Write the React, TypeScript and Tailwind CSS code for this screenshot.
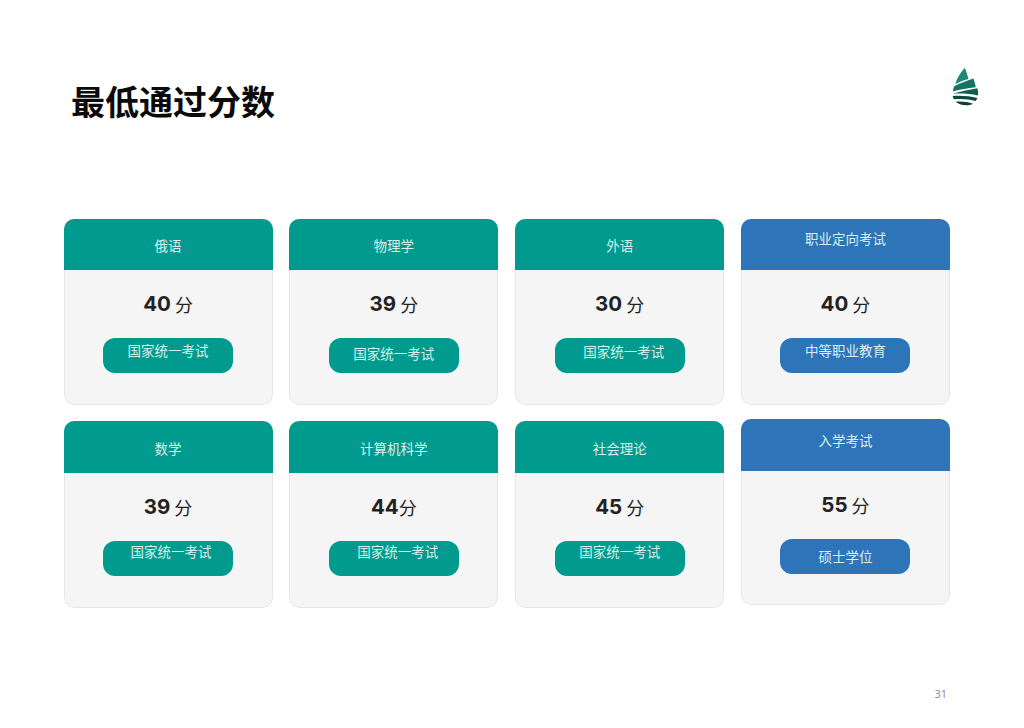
const cjk = "font-['Noto_Sans_CJK_SC',serif]";

type Card = {
  head: string;
  score: string;
  unit: string;
  pill: string;
  blue?: boolean;
  headClass: string;
  pillClass: string;
  cardClass: string;
};

const cards: Card[] = [
  { head: "俄语", score: "40", unit: " 分", pill: "国家统一考试", headClass: "h-[51px] pt-[2px]", pillClass: "pb-[11px]", cardClass: "h-[186px]" },
  { head: "物理学", score: "39", unit: " 分", pill: "国家统一考试", headClass: "h-[51px] pt-[2px]", pillClass: "pb-[5px]", cardClass: "h-[186px]" },
  { head: "外语", score: "30", unit: " 分", pill: "国家统一考试", headClass: "h-[51px] pt-[2px]", pillClass: "pb-[9px] pl-[8px]", cardClass: "h-[186px]" },
  { head: "职业定向考试", score: "40", unit: " 分", pill: "中等职业教育", blue: true, headClass: "h-[51px] pb-[13px]", pillClass: "pb-[11px]", cardClass: "h-[186px]" },
  { head: "数学", score: "39", unit: " 分", pill: "国家统一考试", headClass: "h-[52px] pt-[3px]", pillClass: "pb-[15px] pl-[6px]", cardClass: "h-[187px]" },
  { head: "计算机科学", score: "44", unit: "分", pill: "国家统一考试", headClass: "h-[52px] pt-[3px]", pillClass: "pb-[15px] pl-[8px]", cardClass: "h-[187px]" },
  { head: "社会理论", score: "45", unit: " 分", pill: "国家统一考试", headClass: "h-[52px] pt-[3px]", pillClass: "pb-[15px]", cardClass: "h-[187px]" },
  { head: "入学考试", score: "55", unit: " 分", pill: "硕士学位", blue: true, headClass: "h-[52px] pb-[9px]", pillClass: "pt-0", cardClass: "h-[186px] -mt-[2px]" },
];

function Logo() {
  return (
    <svg width="29" height="41" viewBox="66 48 88 122" aria-hidden="true">
      <path d="M108 52 C112 62 116 74 119 86 C104 90 90 95 79 102 C84 82 96 66 108 52Z" fill="#1d8a74" />
      <path d="M134 85 C137 93 140 102 141 111 C118 113 92 118 72 124 C72 118 74 112 76 108 C92 100 114 92 134 85Z" fill="#137561" />
      <path d="M146 114 C148 121 149 128 148 136 C124 131 96 129 71 131 C92 125 120 118 146 114Z" fill="#0f5f50" />
      <path d="M71 138 C96 136 122 138 146 144 C145 147 143 150 141 153 C120 147 96 145 75 148 C73 145 72 142 71 138Z" fill="#0c4a40" />
      <path d="M80 155 C96 153 116 155 133 161 C118 168 96 168 80 155Z" fill="#0b4038" />
    </svg>
  );
}

function ScoreCard({ c }: { c: Card }) {
  return (
    <div className={`flex flex-col overflow-hidden rounded-[10px] ${c.cardClass}`}>
      <div className={`shrink-0 flex items-center justify-center text-[13.5px] text-[#d8efeb] ${cjk} ${c.blue ? "bg-[#2e74b8]" : "bg-[#009b8e]"} ${c.headClass}`}>
        {c.head}
      </div>
      <div className="flex-1 flex flex-col items-center bg-[#f5f5f5] border-x border-b border-[#e6e6e6] rounded-b-[10px]">
        <div className="mt-[21px] h-[26px] flex items-center text-[#222222]">
          <span className="font-['Inter',sans-serif] font-bold text-[20.5px] leading-[26px]">{c.score}</span>
          <span className="font-['Noto_Sans_CJK_SC',sans-serif] font-normal text-[18px] leading-[26px] whitespace-pre">{c.unit}</span>
        </div>
        <div className={`mt-[21px] w-[130px] h-[35px] rounded-[12px] flex items-center justify-center text-[13.5px] text-[#d8efeb] ${cjk} ${c.blue ? "bg-[#2e74b8]" : "bg-[#009b8e]"} ${c.pillClass}`}>
          {c.pill}
        </div>
      </div>
    </div>
  );
}

export default function App() {
  return (
    <div className="w-[1024px] h-[728px] bg-white flex flex-col overflow-hidden">
      <header className="h-[219px] shrink-0 flex justify-between pl-[71px] pr-[44px]">
        <h1 className="mt-[81px] h-[40px] text-[34px] leading-[40px] font-bold text-[#0a0a0a] font-['Noto_Sans_CJK_SC',sans-serif]">最低通过分数</h1>
        <div className="mt-[66px]"><Logo /></div>
      </header>
      <main className="w-[886.5px] ml-[63.5px] grid grid-cols-4 gap-x-[16.67px] gap-y-[16px]">
        {cards.map((c, i) => (
          <ScoreCard key={i} c={c} />
        ))}
      </main>
      <footer className="mt-[79px] pr-[77px] text-right text-[11px] leading-[14px] text-[#8a8a8a] font-['Open_Sans',sans-serif]">31</footer>
    </div>
  );
}
